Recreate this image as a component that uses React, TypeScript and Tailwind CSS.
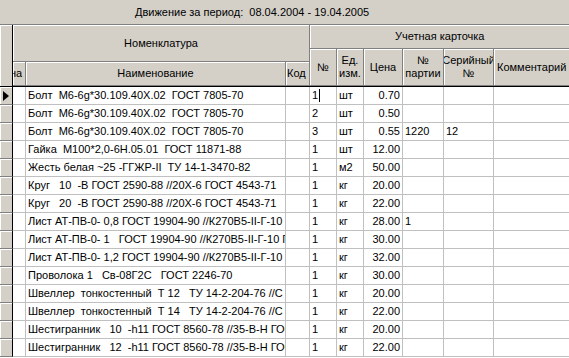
import React from "react";

type Row = { name: string; no: string; unit: string; price: string; batch?: string; serial?: string; cursor?: boolean };

const rows: Row[] = [
  { name: "Болт  М6-6g*30.109.40Х.02  ГОСТ 7805-70", no: "1", unit: "шт", price: "0.70", cursor: true },
  { name: "Болт  М6-6g*30.109.40Х.02  ГОСТ 7805-70", no: "2", unit: "шт", price: "0.50" },
  { name: "Болт  М6-6g*30.109.40Х.02  ГОСТ 7805-70", no: "3", unit: "шт", price: "0.55", batch: "1220", serial: "12" },
  { name: "Гайка  М100*2,0-6Н.05.01  ГОСТ 11871-88", no: "1", unit: "шт", price: "12.00" },
  { name: "Жесть белая ~25 -ГГЖР-II  ТУ 14-1-3470-82", no: "1", unit: "м2", price: "50.00" },
  { name: "Круг   10  -В ГОСТ 2590-88 //20Х-6 ГОСТ 4543-71", no: "1", unit: "кг", price: "20.00" },
  { name: "Круг   20  -В ГОСТ 2590-88 //20Х-6 ГОСТ 4543-71", no: "1", unit: "кг", price: "22.00" },
  { name: "Лист АТ-ПВ-0- 0,8 ГОСТ 19904-90 //К270В5-II-Г-10", no: "1", unit: "кг", price: "28.00", batch: "1" },
  { name: "Лист АТ-ПВ-0- 1   ГОСТ 19904-90 //К270В5-II-Г-10 ГОСТ", no: "1", unit: "кг", price: "30.00" },
  { name: "Лист АТ-ПВ-0- 1,2 ГОСТ 19904-90 //К270В5-II-Г-10", no: "1", unit: "кг", price: "32.00" },
  { name: "Проволока 1   Св-08Г2С   ГОСТ 2246-70", no: "1", unit: "кг", price: "30.00" },
  { name: "Швеллер  тонкостенный  Т 12   ТУ 14-2-204-76 //С", no: "1", unit: "кг", price: "20.00" },
  { name: "Швеллер  тонкостенный  Т 14   ТУ 14-2-204-76 //С", no: "1", unit: "кг", price: "22.00" },
  { name: "Шестигранник   10  -h11 ГОСТ 8560-78 //35-В-Н ГОСТ", no: "1", unit: "кг", price: "20.00" },
  { name: "Шестигранник   12  -h11 ГОСТ 8560-78 //35-В-Н ГОСТ", no: "1", unit: "кг", price: "22.00" },
];

const hdr =
  "bg-[#d4d0c8] border-r border-b border-[#808080] shadow-[inset_1px_1px_0_#ffffff] flex items-center justify-center text-center overflow-hidden leading-[13px]";
const cell = "h-[18px] border-r border-b border-[#c0c0c0] overflow-hidden whitespace-pre flex items-center shrink-0";

export default function App() {
  return (
    <div
      className="w-[569px] h-[358px] overflow-hidden bg-white text-black text-[11px]"
      style={{ fontFamily: '"Liberation Sans", Arial, sans-serif' }}
    >
      <div className="h-[25px] bg-[#d4d0c8] border-b border-[#808080] flex items-center pl-[135px] whitespace-pre">
        Движение за период:  08.04.2004 - 19.04.2005
      </div>
      {/* header */}
      <div className="flex h-[62px] border-b border-black">
        <div className="w-[13px] shrink-0 bg-[#d4d0c8] border-r border-black shadow-[inset_1px_1px_0_#ffffff]" />
        <div className="w-[297px] shrink-0 flex flex-col">
          <div className={`${hdr} h-[37px]`}>Номенклатура</div>
          <div className="flex flex-1">
            <div className={`${hdr} w-[13px] justify-start`}>
              <span className="-ml-[3px]">на</span>
            </div>
            <div className={`${hdr} w-[260px]`}>Наименование</div>
            <div className={`${hdr} w-[24px] justify-start pl-[1px]`}>Код</div>
          </div>
        </div>
        <div className="flex-1 flex flex-col min-w-0">
          <div className={`${hdr} h-[24px] w-[300px] justify-start pl-[85px]`}>Учетная карточка</div>
          <div className="flex flex-1">
            <div className={`${hdr} w-[27px] shrink-0`}>№</div>
            <div className={`${hdr} w-[27px] shrink-0`}>
              Ед.<br />изм.
            </div>
            <div className={`${hdr} w-[39px] shrink-0`}>Цена</div>
            <div className={`${hdr} w-[41px] shrink-0`}>
              №<br />партии
            </div>
            <div className={`${hdr} w-[50px] shrink-0`}>
              <span className="whitespace-nowrap">
                Серийный<br />№
              </span>
            </div>
            <div className={`${hdr} w-[100px] shrink-0 justify-start pl-[3px]`}>Комментарий</div>
          </div>
        </div>
      </div>
      {/* body */}
      {rows.map((r, i) => (
        <div key={i} className="flex">
          <div className="w-[13px] h-[18px] shrink-0 bg-[#d4d0c8] border-r border-black border-b border-b-[#808080] shadow-[inset_1px_1px_0_#ffffff] flex items-center pl-[3px]">
            {i === 0 && (
              <svg width="6" height="10" viewBox="0 0 6 10">
                <polygon points="0,0 6,5 0,10" fill="#000" />
              </svg>
            )}
          </div>
          <div className={`${cell} w-[13px]`} />
          <div className={`${cell} w-[260px] pl-[2px]`}>{r.name}</div>
          <div className={`${cell} w-[24px]`} />
          <div className={`${cell} w-[27px] pl-[2px]`}>
            {r.no}
            {r.cursor && <span className="inline-block w-px h-[13px] bg-black ml-[1px]" />}
          </div>
          <div className={`${cell} w-[27px] pl-[2px]`}>{r.unit}</div>
          <div className={`${cell} w-[39px] justify-end pr-[2px]`}>{r.price}</div>
          <div className={`${cell} w-[41px] pl-[2px]`}>{r.batch ?? ""}</div>
          <div className={`${cell} w-[50px] pl-[2px]`}>{r.serial ?? ""}</div>
          <div className={`${cell} w-[100px]`} />
        </div>
      ))}
    </div>
  );
}
